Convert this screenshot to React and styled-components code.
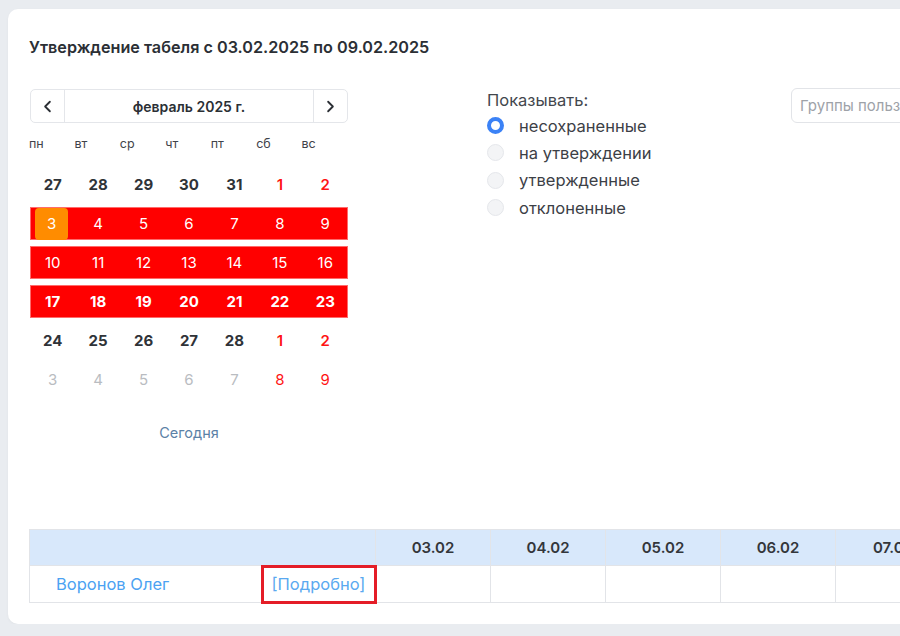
import React, { useState } from 'react';
import styled, { createGlobalStyle } from 'styled-components';
import { ChevronLeft, ChevronRight } from 'lucide-react';

const GlobalStyle = createGlobalStyle`
  html, body {
    margin: 0;
    padding: 0;
    background: #e9ecf0;
    overflow: hidden;
    font-family: Inter, 'Noto Sans', sans-serif;
  }
`;

const weekDays = ['пн', 'вт', 'ср', 'чт', 'пт', 'сб', 'вс'];

// kind: plain (bold dark), range (red band), rangeBold, muted (next month)
const weeks = [
  { kind: 'plain', days: [27, 28, 29, 30, 31, 1, 2] },
  { kind: 'range', days: [3, 4, 5, 6, 7, 8, 9] },
  { kind: 'range', days: [10, 11, 12, 13, 14, 15, 16] },
  { kind: 'rangeBold', days: [17, 18, 19, 20, 21, 22, 23] },
  { kind: 'plain', days: [24, 25, 26, 27, 28, 1, 2] },
  { kind: 'muted', days: [3, 4, 5, 6, 7, 8, 9] },
];

const filters = ['несохраненные', 'на утверждении', 'утвержденные', 'отклоненные'];
const dates = ['03.02', '04.02', '05.02', '06.02', '07.02', '08.02', '09.02'];

const NAME_W = 232;
const LINK_W = 114;
const DATE_W = 115;

const Page = styled.div`
  padding: 9px 0 0 8px;
`;

const Card = styled.div`
  width: 1240px;
  background: #fff;
  border-radius: 10px;
  padding: 28px 0 21px 21px;
  box-sizing: border-box;
  box-shadow: 0 1px 3px rgba(0, 0, 0, 0.04);
`;

const Title = styled.h1`
  margin: 0;
  font-size: 16.2px;
  line-height: 20px;
  font-weight: 600;
  color: #2b2f35;
`;

const Top = styled.div`
  display: flex;
  align-items: flex-start;
  margin-top: 32px;
  padding-left: 1px;
  height: 440px;
`;

const Calendar = styled.div`
  width: 318px;
  display: flex;
  flex-direction: column;
`;

const Nav = styled.div`
  display: flex;
  height: 34px;
  border: 1px solid #e4e6ea;
  border-radius: 5px;
  box-sizing: border-box;
`;

const NavButton = styled.div`
  width: 33px;
  display: flex;
  align-items: center;
  justify-content: center;
  color: #2b2f35;
  ${p => (p.$side === 'left' ? 'border-right: 1px solid #e4e6ea;' : 'border-left: 1px solid #e4e6ea;')}
`;

const MonthLabel = styled.div`
  flex: 1;
  display: flex;
  align-items: center;
  justify-content: center;
  font-size: 14px;
  font-weight: 600;
  color: #2b2f35;
`;

const WeekHead = styled.div`
  display: grid;
  grid-template-columns: repeat(7, 1fr);
  margin-top: 13px;
  margin-bottom: 16px;
`;

const WeekDay = styled.div`
  font-size: 12.5px;
  line-height: 16px;
  color: #3f434a;
  margin-left: -1px;
`;

const Weeks = styled.div`
  display: flex;
  flex-direction: column;
  gap: 6px;
`;

const WeekRow = styled.div`
  display: grid;
  grid-template-columns: repeat(7, 1fr);
  height: 33px;
  background: ${p => (p.$range ? '#ff0000' : 'transparent')};
  box-shadow: ${p => (p.$range ? 'inset 0 0 0 1px #ff6b6b' : 'none')};
`;

const colorFor = (kind, weekend) => {
  if (kind === 'range' || kind === 'rangeBold') return '#ffffff';
  if (weekend) return '#ff1414';
  if (kind === 'muted') return '#b9bcc1';
  return '#2f3338';
};

const weightFor = (kind, weekend) => {
  if (kind === 'rangeBold') return 700;
  if (kind === 'plain') return weekend ? 600 : 700;
  return 400;
};

const DayCell = styled.div`
  display: flex;
  align-items: center;
  justify-content: center;
  font-size: 15px;
  color: ${p => colorFor(p.$kind, p.$weekend)};
  font-weight: ${p => weightFor(p.$kind, p.$weekend)};
`;

const Today = styled.span`
  width: 33px;
  height: 32px;
  display: flex;
  align-items: center;
  justify-content: center;
  background: #ff8c00;
  border-radius: 4px;
  margin-left: -2px;
`;

const TodayLink = styled.div`
  margin-top: 28px;
  text-align: center;
  font-size: 14.5px;
  line-height: 18px;
  color: #5b81a6;
`;

const Filters = styled.div`
  margin-left: 139px;
  width: 304px;
  padding-top: 1px;
  display: flex;
  flex-direction: column;
`;

const FiltersLabel = styled.div`
  font-size: 16.5px;
  line-height: 20px;
  color: #43474d;
  margin-bottom: 2px;
`;

const RadioRow = styled.label`
  display: flex;
  align-items: center;
  height: 27.3px;
  gap: 15px;
  font-size: 16.5px;
  color: #3c4046;
  cursor: pointer;
`;

const RadioDot = styled.span`
  width: 17px;
  height: 17px;
  flex-shrink: 0;
  box-sizing: border-box;
  border-radius: 50%;
  background: ${p => (p.$checked ? '#fff' : '#f3f4f6')};
  border: ${p => (p.$checked ? '4px solid #3b82f6' : '1px solid #e5e7eb')};
`;

const Search = styled.input`
  width: 200px;
  height: 35px;
  box-sizing: border-box;
  margin-top: -1px;
  border: 1px solid #e2e4e8;
  border-radius: 6px;
  padding: 0 8px;
  font-family: inherit;
  font-size: 15px;
  color: #333;
  outline: none;
  &::placeholder {
    color: #9ea2a8;
  }
`;

const Table = styled.table`
  border-collapse: collapse;
  table-layout: fixed;
  width: ${NAME_W + LINK_W + DATE_W * 7}px;
`;

const HeadCell = styled.th`
  height: 36px;
  box-sizing: border-box;
  background: #d8e8fb;
  border: 1px solid #e2e4e8;
  font-size: 15px;
  font-weight: 600;
  color: #33363b;
  text-align: center;
  padding: 0;
`;

const Cell = styled.td`
  height: 37px;
  box-sizing: border-box;
  border: 1px solid #e2e4e8;
  padding: 0;
  font-size: 16.5px;
`;

const NameCell = styled(Cell)`
  padding-left: 26px;
  color: #4ba2f2;
`;

const LinkCell = styled(Cell)`
  text-align: center;
  color: #5aa9f0;
  outline: 3px solid #e41d27;
  outline-offset: -2px;
`;

export default function App() {
  const [filter, setFilter] = useState(0);

  return (
    <Page>
      <GlobalStyle />
      <Card>
        <Title>Утверждение табеля с 03.02.2025 по 09.02.2025</Title>
        <Top>
          <Calendar>
            <Nav>
              <NavButton $side="left">
                <ChevronLeft size={19} strokeWidth={2.3} />
              </NavButton>
              <MonthLabel>февраль 2025 г.</MonthLabel>
              <NavButton $side="right">
                <ChevronRight size={19} strokeWidth={2.3} />
              </NavButton>
            </Nav>
            <WeekHead>
              {weekDays.map(d => (
                <WeekDay key={d}>{d}</WeekDay>
              ))}
            </WeekHead>
            <Weeks>
              {weeks.map((w, wi) => (
                <WeekRow key={wi} $range={w.kind === 'range' || w.kind === 'rangeBold'}>
                  {w.days.map((d, di) => (
                    <DayCell key={di} $kind={w.kind} $weekend={di >= 5}>
                      {wi === 1 && di === 0 ? <Today>{d}</Today> : d}
                    </DayCell>
                  ))}
                </WeekRow>
              ))}
            </Weeks>
            <TodayLink>Сегодня</TodayLink>
          </Calendar>
          <Filters>
            <FiltersLabel>Показывать:</FiltersLabel>
            {filters.map((f, i) => (
              <RadioRow key={f} onClick={() => setFilter(i)}>
                <RadioDot $checked={filter === i} />
                {f}
              </RadioRow>
            ))}
          </Filters>
          <Search placeholder="Группы пользователей" />
        </Top>
        <Table>
          <colgroup>
            <col style={{ width: NAME_W }} />
            <col style={{ width: LINK_W }} />
            {dates.map(d => (
              <col key={d} style={{ width: DATE_W }} />
            ))}
          </colgroup>
          <thead>
            <tr>
              <HeadCell colSpan={2} />
              {dates.map(d => (
                <HeadCell key={d}>{d}</HeadCell>
              ))}
            </tr>
          </thead>
          <tbody>
            <tr>
              <NameCell>Воронов Олег</NameCell>
              <LinkCell>[Подробно]</LinkCell>
              {dates.map(d => (
                <Cell key={d} />
              ))}
            </tr>
          </tbody>
        </Table>
      </Card>
    </Page>
  );
}
